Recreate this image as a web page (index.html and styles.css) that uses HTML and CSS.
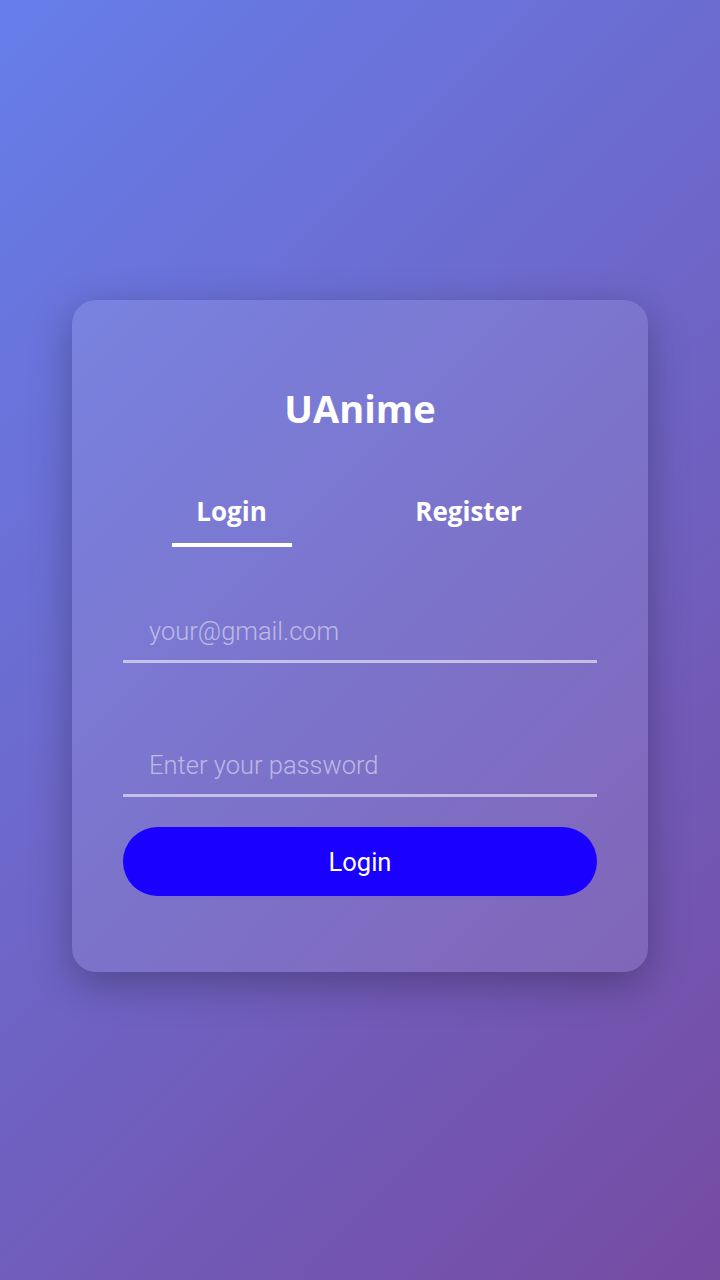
FILE: index.html
```html
<!DOCTYPE html>
<html lang="en">
<head>
    <meta charset="UTF-8">
    <meta name="viewport" content="width=device-width, initial-scale=1.0">
    <title>UAnime</title>
    <link rel="stylesheet" href="styles.css">
</head>
<body>
    <div class="card">
        <h1 class="title">UAnime</h1>

        <div class="tabs">
            <button class="tab active">Login</button>
            <button class="tab">Register</button>
        </div>

        <form class="form">
            <input class="field" type="email" placeholder="your@gmail.com">
            <input class="field" type="password" placeholder="Enter your password">
            <button type="submit" class="submit">Login</button>
        </form>
    </div>
</body>
</html>
```

FILE: styles.css
```css
html {
    height: 100%;
}

body {
    margin: 0;
    min-height: 1280px;
    background: linear-gradient(135deg, #667eea 0%, #764ba2 100%);
    font-family: Roboto, "Liberation Sans", sans-serif;
    display: flex;
    justify-content: center;
    align-items: flex-start;
}

.card {
    margin-top: 300px;
    width: 576px;
    box-sizing: border-box;
    padding: 84px 51px 76px;
    background: rgba(255, 255, 255, 0.1);
    border-radius: 24px;
    box-shadow: 0 12px 40px rgba(0, 0, 0, 0.28);
    display: flex;
    flex-direction: column;
}

.title {
    margin: 0;
    color: #fff;
    text-align: center;
    font-family: "Open Sans", sans-serif;
    font-weight: 700;
    font-size: 38px;
    line-height: 48px;
}

.tabs {
    margin: 61px 10px 0 -10px;
    display: grid;
    grid-template-columns: 1fr 1fr;
}

.tab {
    position: relative;
    background: none;
    border: none;
    padding: 0 0 18px;
    color: #fff;
    font-family: "Open Sans", sans-serif;
    font-weight: 700;
    font-size: 26px;
    line-height: 36px;
    cursor: pointer;
}

.tab.active::after {
    content: "";
    position: absolute;
    left: 50%;
    bottom: 0;
    width: 120px;
    height: 4px;
    margin-left: -60px;
    background: #fff;
}

.form {
    display: flex;
    flex-direction: column;
}

.field {
    height: 30px;
    margin-top: 69px;
    padding: 0 26px 14px;
    background: transparent;
    border: none;
    border-bottom: 3px solid rgba(255, 255, 255, 0.55);
    outline: none;
    color: #fff;
    font-family: Roboto, sans-serif;
    font-weight: 300;
    font-size: 25.5px;
    line-height: 30px;
}

.field + .field {
    margin-top: 87px;
}

.field::placeholder {
    color: rgba(255, 255, 255, 0.5);
}

.submit {
    margin-top: 30px;
    height: 69px;
    border: none;
    border-radius: 35px;
    background: #1a00ff;
    color: #fff;
    font-family: Roboto, sans-serif;
    font-size: 25.5px;
    cursor: pointer;
}
```
